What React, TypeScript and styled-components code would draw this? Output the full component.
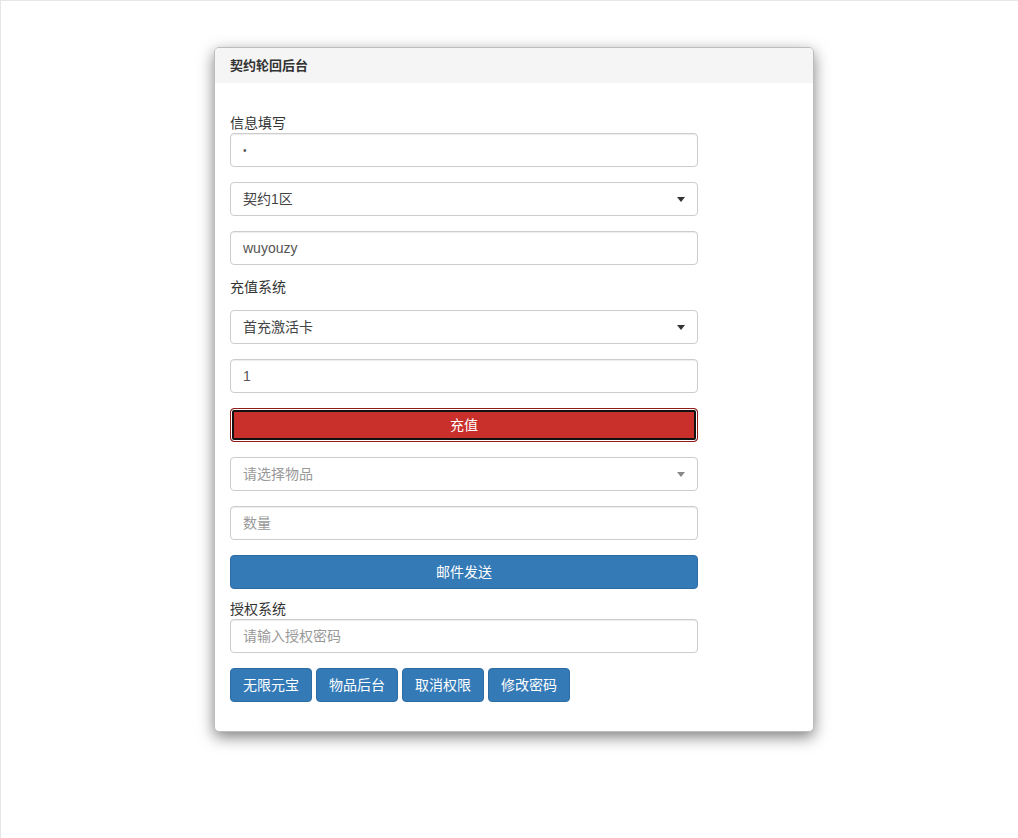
import React from 'react';
import styled, { createGlobalStyle } from 'styled-components';

const GlobalStyle = createGlobalStyle`
  html, body {
    margin: 0;
    padding: 0;
    background: #fff;
  }
  * {
    box-sizing: border-box;
  }
  body {
    font-family: "Liberation Sans", "Noto Sans CJK SC", sans-serif;
    font-size: 14px;
    line-height: 20px;
    color: #333;
  }
`;

const Page = styled.div`
  min-height: 838px;
  border-top: 1px solid #e6e6e6;
  border-left: 1px solid #e6e6e6;
  padding: 46px 0 40px 213px;
`;

const Panel = styled.div`
  width: 600px;
  background: #fff;
  border: 1px solid #bdbdbd;
  border-radius: 5px;
  box-shadow: 0 5px 15px rgba(0, 0, 0, 0.5);
  overflow: hidden;
`;

const PanelHeading = styled.div`
  background: #f5f5f5;
  padding: 8px 15px;
  height: 35px;
  font-size: 13px;
  line-height: 19px;
  font-weight: bold;
  color: #333;
`;

const PanelBody = styled.div`
  padding: 31px 15px 14px;
`;

const FieldLabel = styled.div<{ $top?: number; $bottom?: number }>`
  width: 468px;
  line-height: 19px;
  margin: ${(p) => `${p.$top ?? 0}px 0 ${p.$bottom ?? 0}px`};
  color: #333;
`;

const Group = styled.div<{ $gap?: number }>`
  width: 468px;
  margin-bottom: ${(p) => p.$gap ?? 15}px;
`;

const Input = styled.input<{ $masked?: boolean }>`
  display: block;
  width: 100%;
  height: 34px;
  padding: 6px 12px;
  font-family: inherit;
  font-size: ${(p) => (p.$masked ? '10px' : '14px')};
  line-height: 20px;
  color: #555;
  background: #fff;
  border: 1px solid #ccc;
  border-radius: 4px;
  outline: none;
  box-shadow: inset 0 1px 1px rgba(0, 0, 0, 0.075);

  &::placeholder {
    color: #999;
  }
`;

const SelectBox = styled.div<{ $placeholder?: boolean }>`
  position: relative;
  height: 34px;
  padding: 6px 12px;
  line-height: 20px;
  font-size: 14px;
  color: ${(p) => (p.$placeholder ? '#999' : '#444')};
  background: #fff;
  border: 1px solid #ccc;
  border-radius: 4px;
`;

const Caret = styled.span<{ $muted?: boolean }>`
  position: absolute;
  right: 12px;
  top: 14px;
  width: 0;
  height: 0;
  border-left: 4px solid transparent;
  border-right: 4px solid transparent;
  border-top: 5px solid ${(p) => (p.$muted ? '#888' : '#333')};
`;

const BlockButton = styled.button<{ $tone: 'danger' | 'primary' }>`
  display: block;
  width: 100%;
  height: 34px;
  padding: 6px 12px;
  font-family: inherit;
  font-size: 14px;
  line-height: 20px;
  color: #fff;
  border-radius: 4px;
  cursor: pointer;
  background: ${(p) => (p.$tone === 'danger' ? '#c9302c' : '#337ab7')};
  border: 1px solid ${(p) => (p.$tone === 'danger' ? '#8f1c19' : '#2e6da4')};
  box-shadow: ${(p) =>
    p.$tone === 'danger' ? 'inset 0 0 0 1px #fff, inset 0 0 0 3px #111' : 'none'};
`;

const ButtonRow = styled.div`
  display: flex;
  gap: 4px;
`;

const SmallButton = styled.button`
  width: 82px;
  height: 34px;
  padding: 6px 0;
  font-family: inherit;
  font-size: 14px;
  line-height: 20px;
  color: #fff;
  background: #337ab7;
  border: 1px solid #2e6da4;
  border-radius: 4px;
  cursor: pointer;
  white-space: nowrap;
`;

function Select({ label, placeholder }: { label: string; placeholder?: boolean }) {
  return (
    <SelectBox $placeholder={placeholder}>
      {label}
      <Caret $muted={placeholder} />
    </SelectBox>
  );
}

export default function App() {
  return (
    <>
      <GlobalStyle />
      <Page>
        <Panel>
          <PanelHeading>契约轮回后台</PanelHeading>
          <PanelBody>
            <FieldLabel>信息填写</FieldLabel>
            <Group>
              <Input type="text" $masked defaultValue="•" />
            </Group>
            <Group>
              <Select label="契约1区" />
            </Group>
            <Group>
              <Input type="text" defaultValue="wuyouzy" />
            </Group>

            <FieldLabel $top={-2} $bottom={13}>充值系统</FieldLabel>
            <Group>
              <Select label="首充激活卡" />
            </Group>
            <Group>
              <Input type="text" defaultValue="1" />
            </Group>
            <Group>
              <BlockButton $tone="danger">充值</BlockButton>
            </Group>
            <Group>
              <Select label="请选择物品" placeholder />
            </Group>
            <Group>
              <Input type="text" placeholder="数量" />
            </Group>
            <Group $gap={11}>
              <BlockButton $tone="primary">邮件发送</BlockButton>
            </Group>

            <FieldLabel>授权系统</FieldLabel>
            <Group>
              <Input type="password" placeholder="请输入授权密码" />
            </Group>
            <Group>
              <ButtonRow>
                <SmallButton>无限元宝</SmallButton>
                <SmallButton>物品后台</SmallButton>
                <SmallButton>取消权限</SmallButton>
                <SmallButton>修改密码</SmallButton>
              </ButtonRow>
            </Group>
          </PanelBody>
        </Panel>
      </Page>
    </>
  );
}
